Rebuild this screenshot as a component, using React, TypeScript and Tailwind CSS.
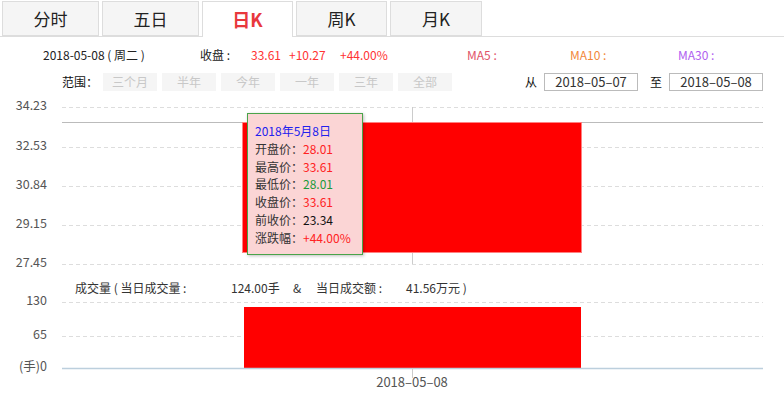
import React from "react"

const font = { fontFamily: '"Noto Sans CJK SC", "Noto Sans", sans-serif' }

const tabs = [
  { label: "分时", w: "w-[97px]" },
  { label: "五日", w: "w-[97px]" },
  { label: "日K", w: "w-[91px]", active: true },
  { label: "周K", w: "w-[91px]" },
  { label: "月K", w: "w-[92px]" },
]

const ranges = ["三个月", "半年", "今年", "一年", "三年", "全部"]

// y values are relative to the chart top (page y 93)
const priceLabels = [
  { v: "34.23", y: 14 },
  { v: "32.53", y: 54 },
  { v: "30.84", y: 93 },
  { v: "29.15", y: 132 },
  { v: "27.45", y: 171 },
]

function Chart() {
  return (
    <div className="relative h-[300px] w-[784px]">
      <svg width="784" height="300" className="block" style={font}>
        {priceLabels.map((p) => (
          <g key={p.v}>
            <line x1="62" x2="763" y1={p.y + 0.5} y2={p.y + 0.5} stroke="#ddd" strokeDasharray="4 3" />
            <text x="47" y={p.y} textAnchor="end" dominantBaseline="middle" fontSize="12.5" fill="#555">
              {p.v}
            </text>
          </g>
        ))}
        <line x1="62" x2="763" y1="29.5" y2="29.5" stroke="#bbb" />
        <line x1="412.5" x2="412.5" y1="14" y2="171" stroke="#ccc" />
        <rect x="242.5" y="29.5" width="339" height="130" fill="#ff0000" stroke="#ff8080" />

        <g fontSize="12" fill="#333">
          <text x="75" y="197" dominantBaseline="middle">成交量 ( 当日成交量 :</text>
          <text x="231" y="197" dominantBaseline="middle">124.00手</text>
          <text x="293" y="197" dominantBaseline="middle">&amp;</text>
          <text x="316" y="197" dominantBaseline="middle">当日成交额 :</text>
          <text x="406" y="197" dominantBaseline="middle">41.56万元 )</text>
        </g>

        <line x1="62" x2="763" y1="209.5" y2="209.5" stroke="#ddd" strokeDasharray="4 3" />
        <line x1="62" x2="763" y1="243.5" y2="243.5" stroke="#ddd" strokeDasharray="4 3" />
        <rect x="244" y="214" width="337" height="61" fill="#ff0000" />
        <line x1="62" x2="763" y1="275.5" y2="275.5" stroke="#bccfdd" strokeWidth="1.5" />
        <line x1="412.5" x2="412.5" y1="275" y2="285" stroke="#ccc" />
        <g fontSize="12.5" fill="#555" textAnchor="end">
          <text x="47" y="209" dominantBaseline="middle">130</text>
          <text x="47" y="243" dominantBaseline="middle">65</text>
          <text x="47" y="275" dominantBaseline="middle">(手)0</text>
        </g>
        <text x="412" y="290" textAnchor="middle" dominantBaseline="middle" fontSize="13" fill="#555">
          2018–05–08
        </text>
      </svg>

      <div
        className="absolute left-[247px] top-[20px] flex h-[142px] w-[116px] flex-col border border-[#4aa44a] bg-[#fbd5d5] pl-[7px] pt-[8px] text-[12px] leading-[17.8px] text-[#333] shadow-[1px_1px_3px_rgba(0,0,0,0.25)]"
        style={font}
      >
        <span className="text-[#2222ee]">2018年5月8日</span>
        <span>开盘价：<span className="text-[#ff2222]">28.01</span></span>
        <span>最高价：<span className="text-[#ff2222]">33.61</span></span>
        <span>最低价：<span className="text-[#1a9a3a]">28.01</span></span>
        <span>收盘价：<span className="text-[#ff2222]">33.61</span></span>
        <span>前收价：<span className="text-[#111]">23.34</span></span>
        <span>涨跌幅：<span className="text-[#ff2222]">+44.00%</span></span>
      </div>
    </div>
  )
}

export default function App() {
  return (
    <div className="h-[393px] w-[784px] overflow-hidden bg-white text-[#333]" style={font}>
      <div className="flex h-[37px] items-end gap-[3px] border-b border-[#ddd] pl-[2px]">
        {tabs.map((t) =>
          t.active ? (
            <div
              key={t.label}
              className={`${t.w} -mb-px flex h-[36px] items-center justify-center border border-b-0 border-[#ddd] bg-white text-[18px] font-bold text-[#e8383d]`}
            >
              {t.label}
            </div>
          ) : (
            <div
              key={t.label}
              className={`${t.w} flex h-[35px] items-center justify-center border border-[#ddd] bg-[#f5f5f5] text-[17px] text-[#222]`}
            >
              {t.label}
            </div>
          )
        )}
      </div>

      <div className="flex h-[30px] items-center pt-[6px] text-[12px]">
        <span className="ml-[43px] w-[157px] text-[#222]">2018-05-08 ( 周二 )</span>
        <span className="w-[51px] text-[#222]">收盘 :</span>
        <span className="w-[38px] text-[#ff3333]">33.61</span>
        <span className="w-[51px] text-[#ff3333]">+10.27</span>
        <span className="w-[127px] text-[#ff3333]">+44.00%</span>
        <span className="w-[103px] text-[#df5468]">MA5 :</span>
        <span className="w-[108px] text-[#f2883a]">MA10 :</span>
        <span className="text-[#b060f0]">MA30 :</span>
      </div>

      <div className="flex h-[26px] items-start pt-[6px] text-[12px]">
        <span className="ml-[62px] w-[41px] leading-[18px] text-[#111]">范围：</span>
        <div className="flex gap-[5px]">
          {ranges.map((r) => (
            <div key={r} className="flex h-[18px] w-[54px] items-center justify-center bg-[#f5f5f5] text-[#c8c8c8]">
              {r}
            </div>
          ))}
        </div>
        <span className="ml-[73px] w-[19px] leading-[18px] text-[#111]">从</span>
        <div className="flex h-[18px] w-[94px] items-center justify-center border border-[#bbb] text-[13px] text-[#333]">
          2018–05–07
        </div>
        <span className="ml-[12px] w-[19px] leading-[18px] text-[#111]">至</span>
        <div className="flex h-[18px] w-[94px] items-center justify-center border border-[#bbb] text-[13px] text-[#333]">
          2018–05–08
        </div>
      </div>

      <Chart />
    </div>
  )
}
